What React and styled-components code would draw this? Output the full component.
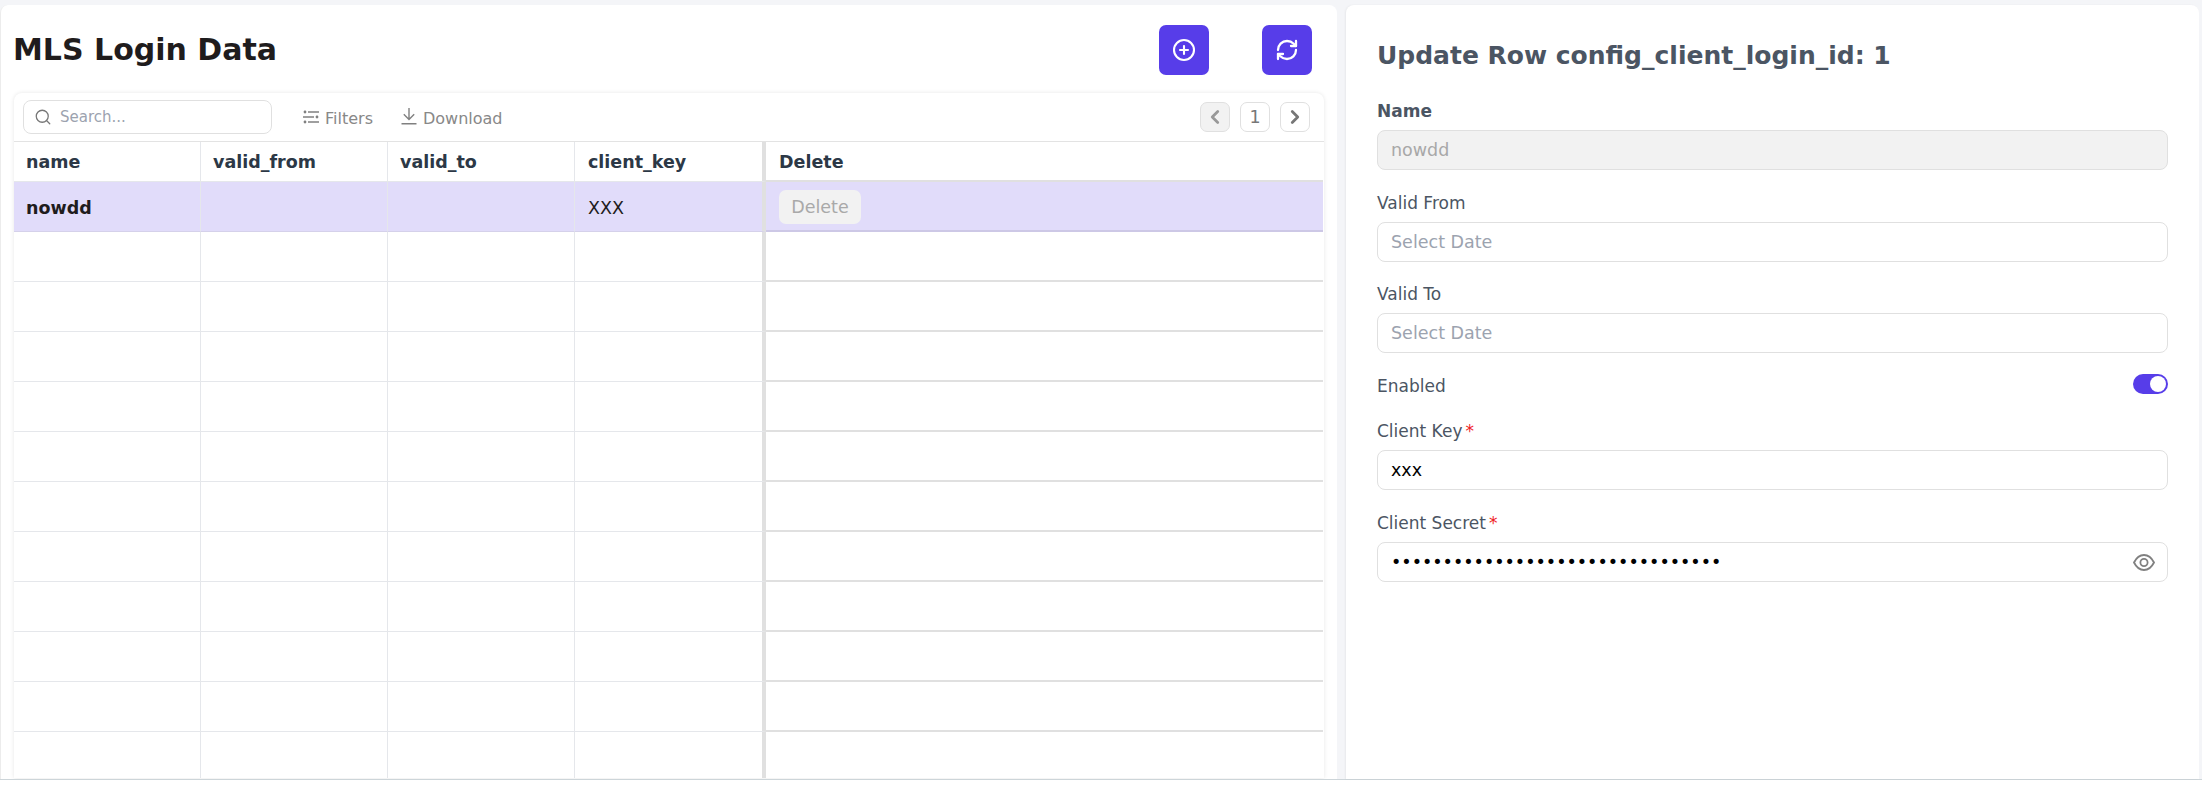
import React from "react";
import styled, { createGlobalStyle } from "styled-components";
import { CirclePlus, RefreshCw, Search as SearchGlyph, ChevronLeft, ChevronRight } from "lucide-react";

const Global = createGlobalStyle`
  html, body { margin: 0; padding: 0; background: #fff; }
  * { box-sizing: border-box; }
  body { font-family: "DejaVu Sans", sans-serif; }
`;

const Page = styled.div`
  height: 791px;
  width: 2202px;
  display: flex;
  flex-direction: column;
  overflow: hidden;
  background: #fff;
`;
const Main = styled.main`
  height: 780px;
  display: flex;
  gap: 9px;
  padding: 5px 3px 0 0;
  background: #f4f5f8;
  border-bottom: 1px solid #cdd5d9;
`;
const LeftPanel = styled.section`
  width: 1337px;
  flex: none;
  background: #fff;
  border-left: 1px solid #ececec;
  border-radius: 8px 8px 0 0;
  padding: 0 13px 0 13px;
  overflow: hidden;
`;
const HeaderBar = styled.header`
  height: 88px;
  display: flex;
  align-items: center;
  padding-top: 2px;
`;
const Title = styled.h1`
  margin: 0 0 0 -1px;
  flex: 1;
  font-size: 30px;
  line-height: 40px;
  font-weight: 700;
  color: #1f1c1d;
`;
const IconButton = styled.button`
  width: 50px;
  height: 50px;
  border: 0;
  padding: 0;
  margin-left: ${(p) => p.$gap}px;
  margin-right: 12px;
  border-radius: 7px;
  background: #573de9;
  color: #fff;
  display: flex;
  align-items: center;
  justify-content: center;
`;
const Card = styled.div`
  height: 685px;
  overflow: hidden;
  background: #fff;
  border-radius: 8px 8px 0 0;
  box-shadow: 0 0 4px rgba(0, 0, 0, 0.1);
`;
const Toolbar = styled.div`
  height: 49px;
  display: flex;
  align-items: center;
  padding: 0 14px 0 9px;
  border-bottom: 1px solid #e3e3e3;
`;
const SearchBox = styled.div`
  width: 249px;
  height: 34px;
  display: flex;
  align-items: center;
  gap: 8px;
  padding: 0 10px;
  border: 1px solid #e0e0e0;
  border-radius: 8px;
  color: #777;
`;
const SearchText = styled.span`
  font-size: 15px;
  color: #9ca3af;
`;
const ToolAction = styled.div`
  display: flex;
  align-items: center;
  gap: 6px;
  font-size: 16px;
  color: #888;
  margin-left: ${(p) => p.$left}px;
  margin-top: 3px;
  & svg { margin-top: -4px; }
`;
const Spacer = styled.div`
  flex: 1;
`;
const Pager = styled.div`
  display: flex;
  gap: 10px;
`;
const PageCell = styled.div`
  width: 30px;
  height: 30px;
  border: 1px solid #e0e0e0;
  border-radius: 7px;
  display: flex;
  align-items: center;
  justify-content: center;
  font-size: 17.5px;
  color: #777;
  background: ${(p) => (p.$off ? "#f2f2f2" : "#fff")};
`;
const Row = styled.div`
  display: grid;
  grid-template-columns: 187px 187px 187px 191px 1fr;
  height: ${(p) => p.$h}px;
  background: ${(p) => (p.$on ? "#e1dcfa" : "#fff")};
  margin-right: 1px;
`;
const Cell = styled.div`
  display: flex;
  align-items: center;
  padding-left: ${(p) => (p.$frozen ? 13 : 12)}px;
  padding-top: ${(p) => (p.$text ? 3 : 1)}px;
  font-size: 17.5px;
  font-weight: ${(p) => (p.$bold ? 700 : 400)};
  color: ${(p) => (p.$head ? "#2c3846" : "#1f1c1d")};
  border-right: ${(p) => (p.$frozen === 1 ? "4px solid #e0e0e0" : p.$last ? "0" : "1px solid #e5e7eb")};
  border-bottom: ${(p) =>
    p.$last ? `2px solid ${p.$on ? "#cdc8e6" : "#e0e0e0"}` : `1px solid ${p.$on ? "#d5d1ea" : "#e5e7eb"}`};
`;
const DeleteBtn = styled.button`
  width: 82px;
  height: 34px;
  border: 0;
  border-radius: 7px;
  background: #f2f2f2;
  color: #a9a9a9;
  font: 400 17.5px "DejaVu Sans", sans-serif;
  padding: 0;
`;
const RightPanel = styled.section`
  flex: 1;
  background: #fff;
  border-radius: 8px 8px 0 0;
  padding: 31px 31px 0 31px;
  box-shadow: -1px 0 2px rgba(0, 0, 0, 0.05);
`;
const FormTitle = styled.h2`
  margin: 0 0 23px;
  font-size: 25px;
  line-height: 40px;
  font-weight: 700;
  color: #4b5563;
`;
const Field = styled.div`
  margin-bottom: 20.5px;
  position: relative;
`;
const Label = styled.label`
  display: block;
  height: 24px;
  line-height: 24px;
  margin-bottom: 7px;
  font-size: 17px;
  font-weight: ${(p) => (p.$bold ? 700 : 400)};
  color: #4b5563;
`;
const Req = styled.span`
  color: #ef1c24;
  margin-left: 3px;
`;
const Input = styled.input`
  display: block;
  width: 100%;
  height: 40px;
  padding: 0 13px;
  border: 1px solid #e0e0e0;
  border-radius: 8px;
  outline: 0;
  background: ${(p) => (p.disabled ? "#f2f2f2" : "#fff")};
  color: ${(p) => (p.disabled ? "#a8a8a8" : "#000")};
  font: 400 17.5px "DejaVu Sans", sans-serif;
  &::placeholder { color: #9ca3af; opacity: 1; }
`;
const EyeWrap = styled.span`
  position: absolute;
  right: 13px;
  bottom: 10px;
  display: flex;
`;
const ToggleRow = styled.div`
  height: 25px;
  margin-bottom: 20.5px;
  display: flex;
  justify-content: space-between;
  align-items: flex-start;
`;
const ToggleLabel = styled.span`
  font-size: 17px;
  line-height: 24px;
  color: #4b5563;
`;
const Switch = styled.span`
  width: 35px;
  height: 20px;
  border-radius: 10px;
  background: #573de9;
  display: flex;
  align-items: center;
  justify-content: flex-end;
  padding-right: 2px;
`;
const Knob = styled.span`
  width: 16px;
  height: 16px;
  border-radius: 50%;
  background: #fff;
`;

const FilterIcon = () => (
  <svg width="16" height="14" viewBox="0 0 16 14" fill="none" stroke="#808080" strokeWidth="1.5">
    <path d="M5 2h11M0 7h11M5 12h11" />
    <circle cx="2" cy="2" r="1.4" fill="#808080" stroke="none" />
    <circle cx="14" cy="7" r="1.4" fill="#808080" stroke="none" />
    <circle cx="2" cy="12" r="1.4" fill="#808080" stroke="none" />
  </svg>
);
const DownloadIcon = () => (
  <svg width="16" height="17" viewBox="0 0 16 17" fill="none" stroke="#808080" strokeWidth="1.4">
    <path d="M8 0v11M2.8 6.2 8 11.4l5.2-5.2M0.5 15.8h15" />
  </svg>
);
const EyeIcon = () => (
  <svg width="22" height="19" viewBox="0 0 22 19" fill="none" stroke="#808080" strokeWidth="1.8">
    <path d="M1 9.5C3.5 4.500 7 2 11 2s7.500 2.500 10 7.500C18.500 14.500 15 17 11 17S3.500 14.500 1 9.500Z" />
    <circle cx="11" cy="9.500" r="3.600" />
  </svg>
);

const cols = [0, 1, 2, 3, 4];
const EmptyRow = () => (
  <Row $h={50}>
    {cols.map((c) => (
      <Cell key={c} $frozen={c === 3 ? 1 : c === 4 ? 2 : 0} $last={c === 4} />
    ))}
  </Row>
);

export default function App() {
  return (
    <Page>
      <Global />
      <Main>
        <LeftPanel>
          <HeaderBar>
            <Title>MLS Login Data</Title>
            <IconButton $gap={0}><CirclePlus size={24} strokeWidth={2.1} /></IconButton>
            <IconButton $gap={41}><RefreshCw size={24} strokeWidth={2.3} /></IconButton>
          </HeaderBar>
          <Card>
            <Toolbar>
              <SearchBox>
                <SearchGlyph size={18} strokeWidth={1.7} />
                <SearchText>Search...</SearchText>
              </SearchBox>
              <ToolAction $left={31}><FilterIcon />Filters</ToolAction>
              <ToolAction $left={28}><DownloadIcon />Download</ToolAction>
              <Spacer />
              <Pager>
                <PageCell $off><ChevronLeft size={22} strokeWidth={3} color="#999" /></PageCell>
                <PageCell>1</PageCell>
                <PageCell><ChevronRight size={22} strokeWidth={3} color="#777" /></PageCell>
              </Pager>
            </Toolbar>
            <Row $h={40}>
              <Cell $head $bold>name</Cell>
              <Cell $head $bold>valid_from</Cell>
              <Cell $head $bold>valid_to</Cell>
              <Cell $head $bold $frozen={1}>client_key</Cell>
              <Cell $head $bold $frozen={2} $last>Delete</Cell>
            </Row>
            <Row $h={50} $on>
              <Cell $on $bold $text>nowdd</Cell>
              <Cell $on />
              <Cell $on />
              <Cell $on $text $frozen={1}>XXX</Cell>
              <Cell $on $frozen={2} $last><DeleteBtn>Delete</DeleteBtn></Cell>
            </Row>
            {Array.from({ length: 11 }).map((_, i) => (
              <EmptyRow key={i} />
            ))}
          </Card>
        </LeftPanel>
        <RightPanel>
          <FormTitle>Update Row config_client_login_id: 1</FormTitle>
          <Field>
            <Label $bold>Name</Label>
            <Input disabled value="nowdd" readOnly />
          </Field>
          <Field>
            <Label>Valid From</Label>
            <Input placeholder="Select Date" readOnly />
          </Field>
          <Field>
            <Label>Valid To</Label>
            <Input placeholder="Select Date" readOnly />
          </Field>
          <ToggleRow>
            <ToggleLabel>Enabled</ToggleLabel>
            <Switch><Knob /></Switch>
          </ToggleRow>
          <Field>
            <Label>Client Key<Req>*</Req></Label>
            <Input value="xxx" readOnly />
          </Field>
          <Field>
            <Label>Client Secret<Req>*</Req></Label>
            <Input type="password" value={"x".repeat(32)} readOnly />
            <EyeWrap><EyeIcon /></EyeWrap>
          </Field>
        </RightPanel>
      </Main>
    </Page>
  );
}
